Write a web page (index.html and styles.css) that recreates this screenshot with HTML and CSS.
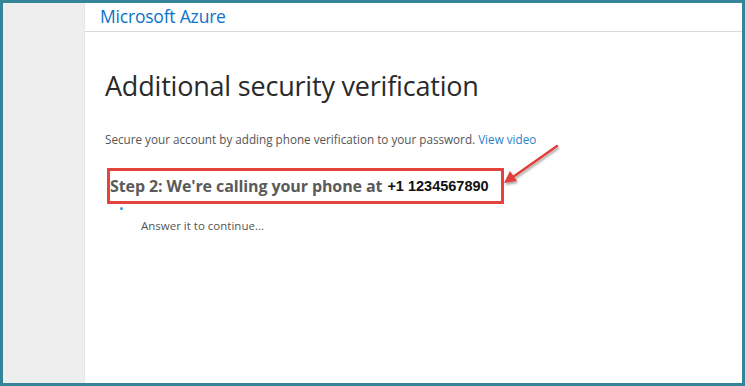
FILE: index.html
```html
<!DOCTYPE html>
<html>
<head>
<meta charset="utf-8">
<link rel="stylesheet" href="styles.css">
</head>
<body>
<div class="frame">
  <aside class="side"></aside>
  <main class="main">
    <header class="head"><span class="brand">Microsoft Azure</span></header>
    <section class="content">
      <h1 class="title">Additional security verification</h1>
      <p class="lead">Secure your account by adding phone verification to your password. <a class="link">View video</a></p>
      <div class="step-wrap">
        <div class="step-box">
          <span class="step">Step 2: We're calling your phone at</span>
          <span class="phone">+1 1234567890</span>
        </div>
        <svg class="arrow" width="70" height="50" viewBox="0 0 70 50">
          <defs>
            <filter id="sh" x="-20%" y="-20%" width="140%" height="140%">
              <feDropShadow dx="1" dy="2" stdDeviation="1.2" flood-color="#000" flood-opacity="0.35"/>
            </filter>
          </defs>
          <g filter="url(#sh)">
            <line x1="58" y1="3" x2="14" y2="34" stroke="#e0403a" stroke-width="2.5" stroke-linecap="round"/>
            <polygon points="5,40 11,28 18,38" fill="#e0403a"/>
          </g>
        </svg>
      </div>
      <div class="dot"></div>
      <p class="answer">Answer it to continue...</p>
    </section>
  </main>
</div>
</body>
</html>
```
FILE: styles.css
```css
html, body { margin: 0; padding: 0; }
body { width: 745px; height: 386px; background: #338597; font-family: "Open Sans", "Noto Sans", sans-serif; }
.frame { box-sizing: border-box; width: 745px; height: 386px; padding: 3px; display: flex; }
.side { width: 81px; background: #eeeeee; border-right: 1px solid #e6e6e6; }
.main { flex: 1; background: #fff; display: flex; flex-direction: column; }
.head { height: 28px; border-bottom: 1px solid #d9d9d9; padding-left: 15px; }
.brand { display: block; color: #0d72c8; font-size: 17.5px; line-height: 28px; margin-top: -1px; letter-spacing: -0.2px; }
.content { padding-left: 20px; position: relative; }
.title { font-weight: 400; font-size: 27px; color: #2a2a2a; margin: 34px 0 0; line-height: 40px; letter-spacing: -0.2px; }
.lead { font-size: 11.7px; color: #555; margin: 24px 0 0; line-height: 18px; }
.link { color: #2c7fc8; }
.step-wrap { position: relative; margin-top: 20px; margin-left: 2px; width: 397px; }
.step-box { box-sizing: border-box; width: 397px; height: 36px; border: 3px solid #e3443d; display: flex; align-items: center; padding-left: 0; }
.step { font-weight: 700; color: #5a5a5a; font-size: 16px; letter-spacing: -0.1px; }
.phone { font-family: "Liberation Sans", Arial, sans-serif; font-weight: 700; color: #111; font-size: 14.5px; margin-left: 5px; }
.arrow { position: absolute; left: 392px; top: -25px; }
.dot { width: 3px; height: 3px; border-radius: 50%; background: #3c9ad8; margin: 3px 0 0 15px; }
.answer { font-size: 11.5px; color: #555; margin: 8px 0 0 36px; }
```
